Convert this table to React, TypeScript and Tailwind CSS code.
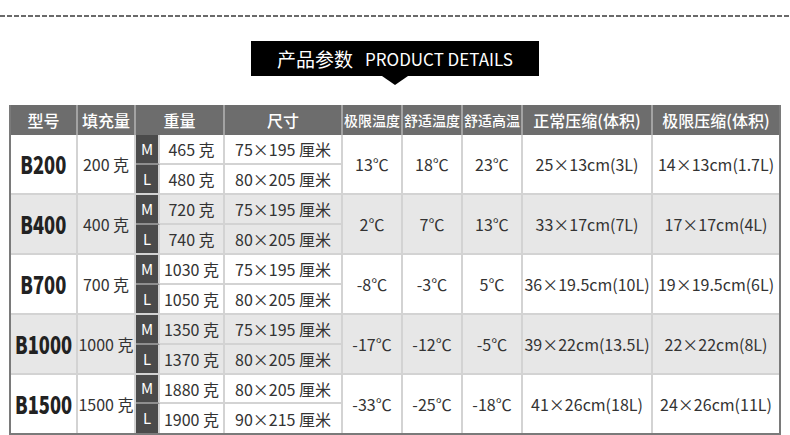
import React from "react";

type Group = {
  model: string;
  fill: string;
  rows: [string, string][];
  t: string[];
  c: string[];
};

const groups: Group[] = [
  { model: "B200", fill: "200 克", rows: [["465 克", "75×195 厘米"], ["480 克", "80×205 厘米"]], t: ["13℃", "18℃", "23℃"], c: ["25×13cm(3L)", "14×13cm(1.7L)"] },
  { model: "B400", fill: "400 克", rows: [["720 克", "75×195 厘米"], ["740 克", "80×205 厘米"]], t: ["2℃", "7℃", "13℃"], c: ["33×17cm(7L)", "17×17cm(4L)"] },
  { model: "B700", fill: "700 克", rows: [["1030 克", "75×195 厘米"], ["1050 克", "80×205 厘米"]], t: ["-8℃", "-3℃", "5℃"], c: ["36×19.5cm(10L)", "19×19.5cm(6L)"] },
  { model: "B1000", fill: "1000 克", rows: [["1350 克", "75×195 厘米"], ["1370 克", "80×205 厘米"]], t: ["-17℃", "-12℃", "-5℃"], c: ["39×22cm(13.5L)", "22×22cm(8L)"] },
  { model: "B1500", fill: "1500 克", rows: [["1880 克", "80×205 厘米"], ["1900 克", "90×215 厘米"]], t: ["-33℃", "-25℃", "-18℃"], c: ["41×26cm(18L)", "24×26cm(11L)"] },
];

const headers: { label: string; span2?: boolean; size: string; last?: boolean }[] = [
  { label: "型号", size: "text-[16px]" },
  { label: "填充量", size: "text-[16px]" },
  { label: "重量", span2: true, size: "text-[16px]" },
  { label: "尺寸", size: "text-[16px]" },
  { label: "极限温度", size: "text-[14px]" },
  { label: "舒适温度", size: "text-[14px]" },
  { label: "舒适高温", size: "text-[14px]" },
  { label: "正常压缩(体积)", size: "text-[16px]" },
  { label: "极限压缩(体积)", size: "text-[16px]", last: true },
];

export default function App() {
  return (
    <div className="w-[790px] h-[435px] overflow-hidden bg-white flex flex-col font-['Noto_Sans_CJK_SC','Noto_Sans',sans-serif] text-[#333]">
      <div className="mt-[15px] h-[2px] w-full bg-[repeating-linear-gradient(90deg,#6a6a6a_0px,#6a6a6a_5px,transparent_5px,transparent_7px)]" />
      <div className="mt-[24px] flex flex-col items-center">
        <div className="w-[288px] h-[35px] bg-black text-white flex items-center justify-center gap-[12px]">
          <span className="text-[19px] leading-none">产品参数</span>
          <span className="text-[17px] leading-none">PRODUCT DETAILS</span>
        </div>
        <div className="w-0 h-0 border-l-[13px] border-r-[13px] border-t-[9px] border-l-transparent border-r-transparent border-t-black" />
      </div>
      <div className="mt-[20px] ml-[9px] w-[772px] border-x-2 border-b-2 border-[#7a7a7a]">
        <div className="grid grid-cols-[67px_58px_24px_65px_118px_60px_60px_60px_130px_126px] grid-rows-[30px_30px_30px_30px_30px_30px_30px_30px_30px_29px_29px]">
          {headers.map((h) => (
            <div
              key={h.label}
              className={
                "flex items-center justify-center bg-[#6d6d6d] text-white font-medium whitespace-nowrap " +
                (h.span2 ? "col-span-2 " : "") +
                h.size +
                " " +
                (h.last ? "" : "border-r-2 border-[#a3a3a3]")
              }
            >
              {h.label}
            </div>
          ))}
          {groups.map((g, gi) => {
            const last = gi === groups.length - 1;
            const bg = gi % 2 === 1 ? "bg-[#e7e7e7]" : "bg-white";
            const bottom = last ? "" : "border-b-2";
            const cell = `flex items-center justify-center whitespace-nowrap text-[16px] border-[#d3d3d3] ${bg}`;
            return (
              <React.Fragment key={g.model}>
                <div className={`${cell} row-span-2 border-r-2 ${bottom} text-[#222]`}>
                  <span className="inline-block scale-x-[0.76] text-[24px] font-black leading-none">{g.model}</span>
                </div>
                <div className={`${cell} row-span-2 border-r-2 ${bottom}`}>{g.fill}</div>
                <div className="flex items-center justify-center bg-[#4b4b4b] text-white text-[15px] border-r-2 border-r-[#d3d3d3] border-b-2 border-b-[#8f8f8f]">
                  M
                </div>
                <div className={`${cell} border-r-2 border-b-2`}>{g.rows[0][0]}</div>
                <div className={`${cell} border-r-2 border-b-2`}>{g.rows[0][1]}</div>
                <div className={`${cell} row-span-2 border-r-2 ${bottom}`}>{g.t[0]}</div>
                <div className={`${cell} row-span-2 border-r-2 ${bottom}`}>{g.t[1]}</div>
                <div className={`${cell} row-span-2 border-r-2 ${bottom}`}>{g.t[2]}</div>
                <div className={`${cell} row-span-2 border-r-2 ${bottom}`}>{g.c[0]}</div>
                <div className={`${cell} row-span-2 ${bottom}`}>{g.c[1]}</div>
                <div className={`flex items-center justify-center bg-[#4b4b4b] text-white text-[15px] border-r-2 border-[#d3d3d3] ${bottom}`}>
                  L
                </div>
                <div className={`${cell} border-r-2 ${bottom}`}>{g.rows[1][0]}</div>
                <div className={`${cell} border-r-2 ${bottom}`}>{g.rows[1][1]}</div>
              </React.Fragment>
            );
          })}
        </div>
      </div>
    </div>
  );
}
